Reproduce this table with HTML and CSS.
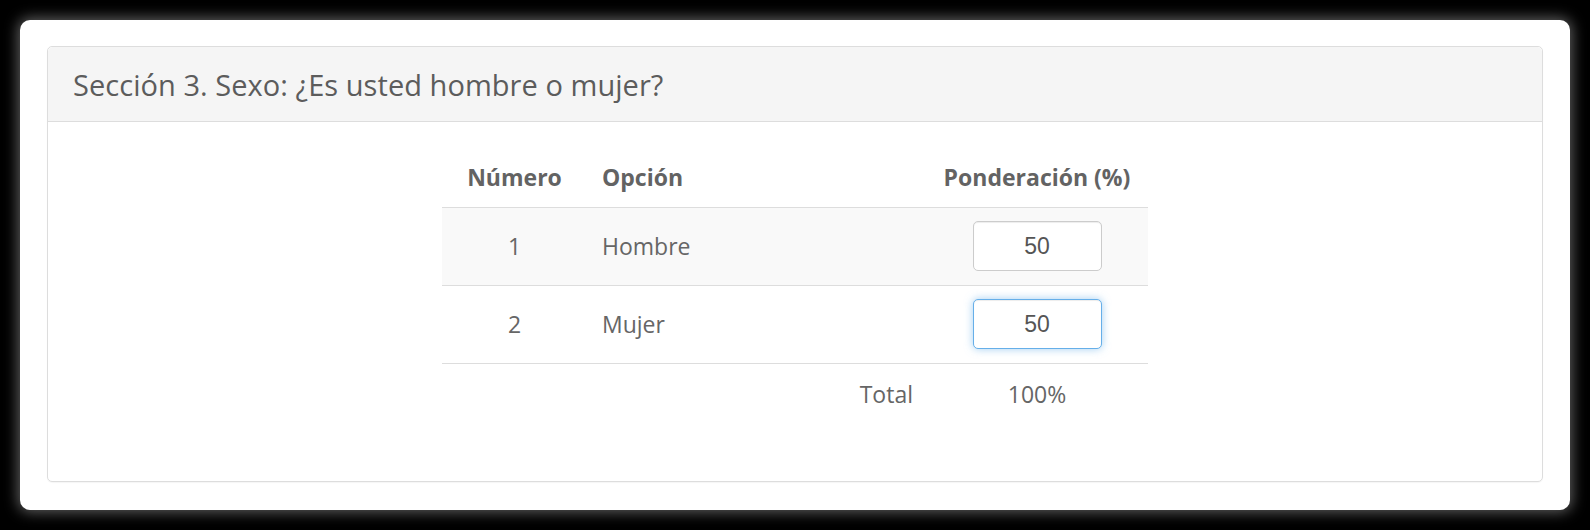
FILE: index.html
```html
<!DOCTYPE html>
<html lang="es">
<head>
<meta charset="utf-8">
<title>Sección 3</title>
<link rel="stylesheet" href="styles.css">
</head>
<body>
<div class="frame">
  <div class="panel">
    <div class="panel-heading">
      <h3 class="panel-title">Sección 3. Sexo: ¿Es usted hombre o mujer?</h3>
    </div>
    <div class="panel-body">
      <table class="weights">
        <colgroup>
          <col class="c-num">
          <col class="c-opt">
          <col class="c-pond">
        </colgroup>
        <thead>
          <tr>
            <th class="center">Número</th>
            <th class="left">Opción</th>
            <th class="center">Ponderación (%)</th>
          </tr>
        </thead>
        <tbody>
          <tr class="striped">
            <td class="center">1</td>
            <td class="left">Hombre</td>
            <td class="center"><input class="field" type="text" value="50"></td>
          </tr>
          <tr>
            <td class="center">2</td>
            <td class="left">Mujer</td>
            <td class="center"><input class="field focused" type="text" value="50"></td>
          </tr>
          <tr class="total">
            <td></td>
            <td class="right">Total</td>
            <td class="center">100%</td>
          </tr>
        </tbody>
      </table>
    </div>
  </div>
</div>
</body>
</html>
```

FILE: styles.css
```css
html, body {
  margin: 0;
  padding: 0;
  background: #000;
}

body {
  font-family: "Open Sans", "DejaVu Sans", sans-serif;
  color: #666666;
  width: 1590px;
  height: 530px;
  overflow: hidden;
}

.frame {
  box-sizing: border-box;
  margin: 20px;
  height: 490px;
  background: #fff;
  border-radius: 10px;
  box-shadow: 0 0 14px 2px rgba(255, 255, 255, 0.38);
  padding: 26px 27px 28px 27px;
  display: flex;
  flex-direction: column;
}

.panel {
  flex: 1;
  border: 1px solid #dddddd;
  border-radius: 5px;
  display: flex;
  flex-direction: column;
  box-shadow: 0 1px 1px rgba(0, 0, 0, 0.04);
}

.panel-heading {
  height: 74px;
  background: #f5f5f5;
  border-bottom: 1px solid #dddddd;
  border-radius: 5px 5px 0 0;
  display: flex;
  align-items: center;
  padding: 0 25px;
}

.panel-title {
  margin: 0;
  font-weight: 400;
  font-size: 29px;
  letter-spacing: 0.05px;
  color: #5c5c5c;
}

.panel-body {
  flex: 1;
  padding-top: 25px;
  display: flex;
  justify-content: center;
  align-items: flex-start;
}

.weights {
  border-collapse: collapse;
  table-layout: fixed;
  width: 706px;
  font-size: 23px;
  line-height: 34px;
}

.c-num { width: 145px; }
.c-opt { width: 339px; }
.c-pond { width: 222px; }

.weights th {
  font-weight: 700;
  padding: 13px 10px;
  border-bottom: 1px solid #dddddd;
  color: #636363;
  white-space: nowrap;
}

.weights th.left { padding-left: 15px; }

.weights td {
  padding: 13px 15px 14px;
  border-bottom: 1px solid #dddddd;
  height: 50px;
  vertical-align: middle;
}

.weights tr.total td {
  border-bottom: none;
  padding-top: 13px;
  padding-bottom: 15px;
  height: 34px;
}

.weights tr.total td.right {
  padding-right: 13px;
}

.striped td {
  background: #f9f9f9;
}

.center { text-align: center; }
.left { text-align: left; }
.right { text-align: right; }

.field {
  box-sizing: border-box;
  width: 129px;
  height: 50px;
  border: 1px solid #cccccc;
  border-radius: 5px;
  background: #fff;
  font-family: "Liberation Sans", Arial, sans-serif;
  font-size: 23px;
  color: #555;
  text-align: center;
  box-shadow: inset 0 1px 1px rgba(0, 0, 0, 0.075);
  outline: none;
  vertical-align: middle;
  padding: 0 8px;
}

.field.focused {
  border-color: #66afe9;
  box-shadow: inset 0 1px 1px rgba(0, 0, 0, 0.075), 0 0 9px rgba(102, 175, 233, 0.6);
}
```
